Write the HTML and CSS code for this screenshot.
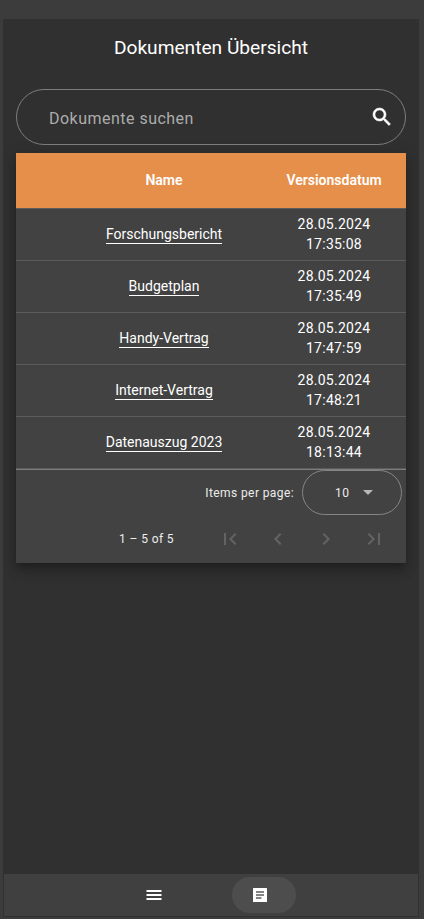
FILE: index.html
```html
<!DOCTYPE html>
<html lang="de">
<head>
<meta charset="utf-8">
<title>Dokumenten Übersicht</title>
<link rel="stylesheet" href="styles.css">
</head>
<body>
<div class="app">
  <main class="content">
    <h1 class="title">Dokumenten Übersicht</h1>
    <div class="search">
      <span class="search-label">Dokumente suchen</span>
      <svg class="search-icon" viewBox="0 0 24 24"><path d="M15.5 14h-.79l-.28-.27C15.41 12.59 16 11.11 16 9.5 16 5.91 13.09 3 9.5 3S3 5.91 3 9.500 5.910 16 9.500 16c1.610 0 3.090-.59 4.230-1.570l.27.28v.79l5 4.990L20.490 19l-4.990-5zm-6 0C7.010 14 5 11.990 5 9.500S7.010 5 9.500 5 14 7.010 14 9.500 11.990 14 9.500 14z"/></svg>
    </div>
    <section class="card">
      <table class="docs">
        <thead><tr><th class="pad"></th><th class="name">Name</th><th class="date"><span>Versionsdatum</span></th></tr></thead>
        <tbody>
          <tr><td></td><td><a>Forschungsbericht</a></td><td>28.05.2024<br>17:35:08</td></tr>
          <tr><td></td><td><a>Budgetplan</a></td><td>28.05.2024<br>17:35:49</td></tr>
          <tr><td></td><td><a>Handy-Vertrag</a></td><td>28.05.2024<br>17:47:59</td></tr>
          <tr><td></td><td><a>Internet-Vertrag</a></td><td>28.05.2024<br>17:48:21</td></tr>
          <tr><td></td><td><a>Datenauszug 2023</a></td><td>28.05.2024<br>18:13:44</td></tr>
        </tbody>
      </table>
      <div class="paginator">
        <div class="page-size">
          <span>Items per page:</span>
          <div class="select"><span>10</span><i class="arrow"></i></div>
        </div>
        <div class="range">
          <span class="range-label">1 – 5 of 5</span>
          <div class="page-btn"><svg viewBox="0 0 24 24"><path d="M18.41 16.59L13.82 12l4.59-4.59L17 6l-6 6 6 6zM6 6h2v12H6z"/></svg></div>
          <div class="page-btn"><svg viewBox="0 0 24 24"><path d="M15.41 7.41L14 6l-6 6 6 6 1.41-1.41L10.83 12z"/></svg></div>
          <div class="page-btn"><svg viewBox="0 0 24 24"><path d="M10 6L8.59 7.41 13.17 12l-4.58 4.59L10 18l6-6z"/></svg></div>
          <div class="page-btn"><svg viewBox="0 0 24 24"><path d="M5.59 7.41L10.18 12l-4.59 4.59L7 18l6-6-6-6zM16 6h2v12h-2z"/></svg></div>
        </div>
      </div>
    </section>
  </main>
  <nav class="nav">
    <div class="nav-item"><svg viewBox="0 0 18 18"><path d="M1.500 4h15v2h-15zM1.500 8h15v2h-15zM1.500 12h15v2h-15z"/></svg></div>
    <div class="nav-item active"><svg viewBox="0 0 18 18"><path d="M2.500 2h13q.5 0 .5.5v13q0 .5-.5.5h-13q-.5 0-.5-.5v-13q0-.5.5-.5z"/><path class="lines" d="M5 5h8v2H5zM5 8h8v2H5zM5 11h5.500v2H5z"/></svg></div>
  </nav>
</div>
</body>
</html>
```

FILE: styles.css
```css
* { box-sizing: border-box; }
body {
  margin: 0;
  height: 919px;
  padding: 19px 5px 2px 3px;
  background: #3c3c3c;
  color: #fff;
  font-family: Roboto, sans-serif;
  overflow: hidden;
}
svg { display: block; fill: currentColor; }
.app {
  height: 898px;
  background: #303030;
  display: flex;
  flex-direction: column;
}
.content { flex: 1; padding: 0 13px; }
.title {
  margin: 0;
  height: 70px;
  padding-top: 13px;
  font-size: 19.2px;
  line-height: 32px;
  font-weight: 400;
  letter-spacing: -0.02px;
  text-align: center;
}
.search {
  height: 56px;
  margin-bottom: 8px;
  padding: 2px 11px 0 32px;
  border: 1px solid #7e7e7e;
  border-radius: 28px;
  display: flex;
  align-items: center;
  justify-content: space-between;
}
.search-label {
  color: #acacac;
  font-size: 16px;
  letter-spacing: 0.48px;
}
.search-icon {
  width: 24px;
  height: 24px;
  margin-top: -2px;
  stroke: currentColor;
  stroke-width: 0.5px;
}
.card {
  height: 410px;
  background: #424242;
  box-shadow: 0 5px 5px -3px rgba(0,0,0,.2), 0 8px 10px 1px rgba(0,0,0,.14), 0 3px 14px 2px rgba(0,0,0,.12);
}
.docs {
  width: 100%;
  table-layout: fixed;
  border-collapse: separate;
  border-spacing: 0;
  font-size: 14px;
  line-height: 20px;
  text-align: center;
}
.docs th {
  height: 56px;
  padding: 0 0 2px;
  background: #e58f4a;
  border-bottom: 1px solid #5b5b5b;
  font-weight: 600;
  letter-spacing: 0;
}
.pad { width: 50px; }
.date { width: 144px; }
.docs td {
  height: 52px;
  padding: 0 0 1px;
  border-bottom: 1px solid #5b5b5b;
  letter-spacing: 0.25px;
}
.docs a {
  padding-bottom: 1px;
  border-bottom: 1px solid #fff;
  letter-spacing: 0;
}
.paginator {
  border-top: 1px solid #7e7e7e;
  color: #ececec;
  font-size: 12px;
  letter-spacing: 0.4px;
}
.page-size {
  display: flex;
  align-items: center;
  justify-content: flex-end;
  gap: 8px;
  padding-right: 4px;
}
.select {
  width: 100px;
  height: 45px;
  padding: 0 28px 0 32px;
  border: 1px solid #858585;
  border-radius: 23px;
  display: flex;
  align-items: center;
  justify-content: space-between;
}
.arrow {
  border: 5px solid transparent;
  border-top-color: #b8b8b8;
  border-bottom: 0;
}
.range {
  height: 48px;
  display: flex;
  align-items: center;
  justify-content: flex-end;
  padding-right: 8px;
}
.range-label { margin-right: 32px; }
.page-btn {
  width: 48px;
  height: 48px;
  padding: 12px;
  color: #636363;
}
.page-btn svg { width: 24px; height: 24px; }
.nav {
  height: 42px;
  margin: 0 1px 1px;
  background: #404040;
  display: flex;
  align-items: center;
  justify-content: center;
  gap: 42px;
}
.nav-item {
  width: 64px;
  height: 36px;
  padding-right: 8px;
  border-radius: 18px;
  display: flex;
  align-items: center;
  justify-content: center;
}
.nav-item svg { width: 18px; height: 18px; }
.active { background: #4d4d4d; }
.lines { fill: #858585; }
```
